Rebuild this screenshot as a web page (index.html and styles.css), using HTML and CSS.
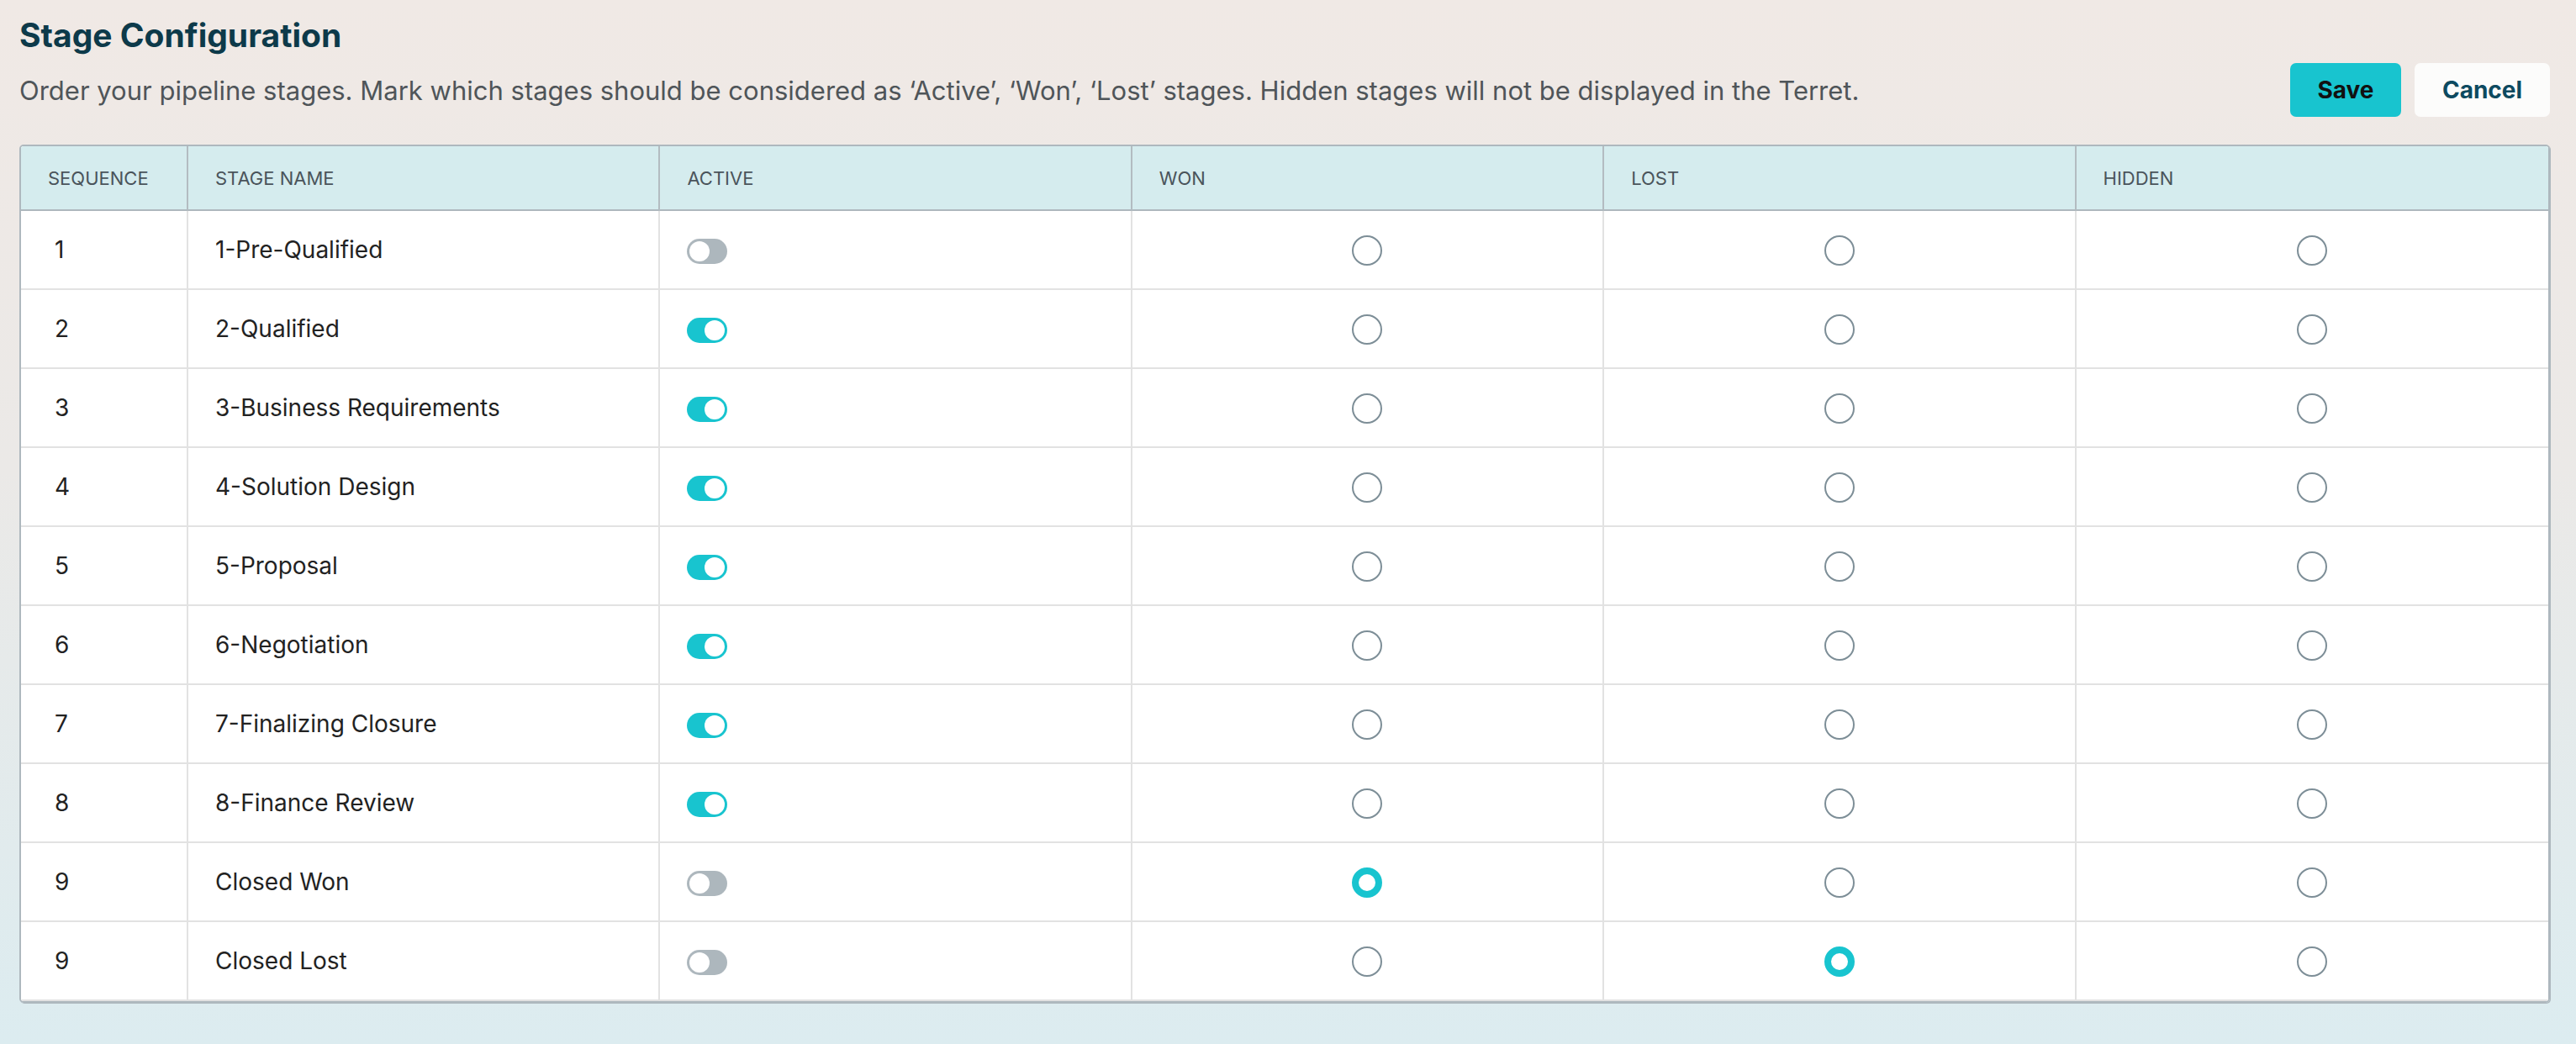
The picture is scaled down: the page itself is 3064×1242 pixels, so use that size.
FILE: index.html
```html
<!DOCTYPE html>
<html lang="en">
<head>
    <meta charset="UTF-8">
    <title>Stage Configuration</title>
    <link rel="stylesheet" href="styles.css">
</head>
<body>

    <div class="page">
        <h1 class="title">Stage Configuration</h1>

        <div class="toolbar">
            <p class="intro">Order your pipeline stages. Mark which stages should be considered as ‘Active’, ‘Won’, ‘Lost’ stages. Hidden stages will not be displayed in the Terret.</p>
            <div class="actions">
                <button class="btn btn-save">Save</button>
                <button class="btn btn-cancel">Cancel</button>
            </div>
        </div>

        <div class="table-wrap">
            <table class="stages">
                <colgroup>
                    <col class="col-seq">
                    <col><col><col><col><col>
                </colgroup>
                <thead>
                    <tr>
                        <th>SEQUENCE</th>
                        <th>STAGE NAME</th>
                        <th>ACTIVE</th>
                        <th>WON</th>
                        <th>LOST</th>
                        <th>HIDDEN</th>
                    </tr>
                </thead>
                <tbody>
                    <tr>
                        <td class="seq">1</td>
                        <td>1-Pre-Qualified</td>
                        <td><label class="switch"><input type="checkbox"><span class="slider"></span></label></td>
                        <td class="pick"><input type="radio" name="won-1"></td>
                        <td class="pick"><input type="radio" name="lost-1"></td>
                        <td class="pick"><input type="radio" name="hidden-1"></td>
                    </tr>
                    <tr>
                        <td class="seq">2</td>
                        <td>2-Qualified</td>
                        <td><label class="switch"><input type="checkbox" checked><span class="slider"></span></label></td>
                        <td class="pick"><input type="radio" name="won-2"></td>
                        <td class="pick"><input type="radio" name="lost-2"></td>
                        <td class="pick"><input type="radio" name="hidden-2"></td>
                    </tr>
                    <tr>
                        <td class="seq">3</td>
                        <td>3-Business Requirements</td>
                        <td><label class="switch"><input type="checkbox" checked><span class="slider"></span></label></td>
                        <td class="pick"><input type="radio" name="won-3"></td>
                        <td class="pick"><input type="radio" name="lost-3"></td>
                        <td class="pick"><input type="radio" name="hidden-3"></td>
                    </tr>
                    <tr>
                        <td class="seq">4</td>
                        <td>4-Solution Design</td>
                        <td><label class="switch"><input type="checkbox" checked><span class="slider"></span></label></td>
                        <td class="pick"><input type="radio" name="won-4"></td>
                        <td class="pick"><input type="radio" name="lost-4"></td>
                        <td class="pick"><input type="radio" name="hidden-4"></td>
                    </tr>
                    <tr>
                        <td class="seq">5</td>
                        <td>5-Proposal</td>
                        <td><label class="switch"><input type="checkbox" checked><span class="slider"></span></label></td>
                        <td class="pick"><input type="radio" name="won-5"></td>
                        <td class="pick"><input type="radio" name="lost-5"></td>
                        <td class="pick"><input type="radio" name="hidden-5"></td>
                    </tr>
                    <tr>
                        <td class="seq">6</td>
                        <td>6-Negotiation</td>
                        <td><label class="switch"><input type="checkbox" checked><span class="slider"></span></label></td>
                        <td class="pick"><input type="radio" name="won-6"></td>
                        <td class="pick"><input type="radio" name="lost-6"></td>
                        <td class="pick"><input type="radio" name="hidden-6"></td>
                    </tr>
                    <tr>
                        <td class="seq">7</td>
                        <td>7-Finalizing Closure</td>
                        <td><label class="switch"><input type="checkbox" checked><span class="slider"></span></label></td>
                        <td class="pick"><input type="radio" name="won-7"></td>
                        <td class="pick"><input type="radio" name="lost-7"></td>
                        <td class="pick"><input type="radio" name="hidden-7"></td>
                    </tr>
                    <tr>
                        <td class="seq">8</td>
                        <td>8-Finance Review</td>
                        <td><label class="switch"><input type="checkbox" checked><span class="slider"></span></label></td>
                        <td class="pick"><input type="radio" name="won-8"></td>
                        <td class="pick"><input type="radio" name="lost-8"></td>
                        <td class="pick"><input type="radio" name="hidden-8"></td>
                    </tr>
                    <tr>
                        <td class="seq">9</td>
                        <td>Closed Won</td>
                        <td><label class="switch"><input type="checkbox"><span class="slider"></span></label></td>
                        <td class="pick"><input type="radio" name="won-9" checked></td>
                        <td class="pick"><input type="radio" name="lost-9"></td>
                        <td class="pick"><input type="radio" name="hidden-9"></td>
                    </tr>
                    <tr>
                        <td class="seq">9</td>
                        <td>Closed Lost</td>
                        <td><label class="switch"><input type="checkbox"><span class="slider"></span></label></td>
                        <td class="pick"><input type="radio" name="won-10"></td>
                        <td class="pick"><input type="radio" name="lost-10" checked></td>
                        <td class="pick"><input type="radio" name="hidden-10"></td>
                    </tr>
                </tbody>
            </table>
        </div>
    </div>

</body>
</html>
```

FILE: styles.css
```css
* {
    box-sizing: border-box;
}
body {
    margin: 0;
    height: 1242px;
    font-family: "Inter", "Noto Sans", sans-serif;
    background: linear-gradient(to bottom, #f0e9e5 0%, #ebe9e7 45%, #dcecf0 100%);
}
.page {
    padding: 18px 31px 0 23px;
}
.title {
    margin: 0;
    font-size: 39px;
    line-height: 47px;
    font-weight: 700;
    color: #0d3a4a;
}
.toolbar {
    display: flex;
    align-items: center;
    justify-content: space-between;
    margin-top: 10px;
}
.intro {
    margin: 0;
    font-size: 31px;
    color: #4f5559;
}
.actions {
    display: flex;
    gap: 16px;
}
.btn {
    height: 64px;
    border: none;
    border-radius: 7px;
    font-family: inherit;
    font-size: 28px;
    font-weight: 700;
    cursor: pointer;
}
.btn-save {
    width: 132px;
    background: #18c4cf;
    color: #111;
}
.btn-cancel {
    width: 161px;
    background: #fcfcfb;
    color: #0d4a60;
}
.table-wrap {
    margin-top: 33px;
    border: 2px solid #aeb8be;
    border-radius: 5px;
    box-shadow: 1px 1px 0 #aeb8be;
    overflow: hidden;
}
.stages {
    width: 100%;
    table-layout: fixed;
    border-collapse: separate;
    border-spacing: 0;
    background: #fff;
}
.col-seq {
    width: 199px;
}
.stages th {
    height: 77px;
    padding: 0 32px;
    text-align: left;
    font-size: 22px;
    font-weight: 400;
    color: #4a545b;
    background: #d5ecee;
    border-bottom: 2px solid #aeb8be;
    border-right: 2px solid #b3bcc1;
}
.stages td {
    height: 94px;
    padding: 0 32px;
    font-size: 28px;
    color: #222;
    border-bottom: 2px solid #e2e2e2;
    border-right: 2px solid #e2e2e2;
}
.stages th:last-child,
.stages td:last-child {
    border-right: none;
}
.stages td.seq {
    padding-left: 40px;
}
.stages td.pick {
    text-align: center;
}
.switch {
    position: relative;
    display: inline-block;
    width: 48px;
    height: 30px;
    vertical-align: middle;
}
.switch input {
    display: none;
}
.slider {
    position: absolute;
    inset: 0;
    border-radius: 15px;
    background: #adb7bd;
}
.slider::before {
    content: "";
    position: absolute;
    top: 3px;
    left: 3px;
    width: 24px;
    height: 24px;
    border-radius: 50%;
    background: #fff;
}
.switch input:checked + .slider {
    background: #18c4cf;
}
.switch input:checked + .slider::before {
    left: 21px;
}
.pick input {
    appearance: none;
    width: 36px;
    height: 36px;
    margin: 0;
    vertical-align: middle;
    border: 2px solid #7d8e97;
    border-radius: 50%;
    background: #fff;
}
.pick input:checked {
    border: 8px solid #18c4cf;
}
```
